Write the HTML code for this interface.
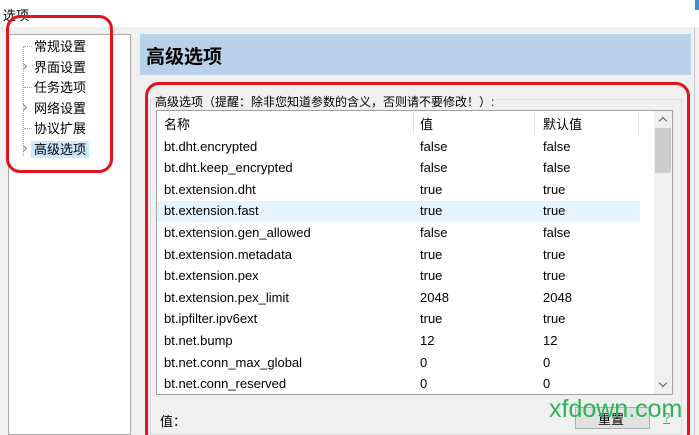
<!DOCTYPE html>
<html><head><meta charset="utf-8"><style>
*{margin:0;padding:0;box-sizing:border-box}
html,body{width:699px;height:435px;overflow:hidden}
body{background:#f0f0f0;font-family:"Liberation Sans","Noto Sans CJK SC",sans-serif;font-size:12px;color:#000;position:relative}
.a{position:absolute}
.t{white-space:nowrap}
.ch{position:absolute;left:21px;width:5px;height:5px;border-right:1px solid #888;border-bottom:1px solid #888;transform:rotate(-45deg)}
</style></head><body>
<div class="a" style="left:0;top:0;width:699px;height:27px;background:#fff"></div>
<div class="a t" style="left:3px;top:5px;font-size:13px">选项</div>
<div class="a" style="left:695px;top:0;width:4px;height:10px;background:#3c8ee0"></div>
<div class="a" style="left:8px;top:34px;width:123px;height:401px;background:#fff;border:1px solid #a8a8a8"></div>
<div class="a" style="left:23px;top:46px;width:1px;height:110px;border-left:1px dotted #aaa"></div>
<div class="a" style="left:24px;top:46px;width:8px;border-top:1px dotted #aaa"></div>
<div class="a" style="left:24px;top:87px;width:8px;border-top:1px dotted #aaa"></div>
<div class="a" style="left:24px;top:128px;width:8px;border-top:1px dotted #aaa"></div>
<div class="ch" style="top:64px"></div>
<div class="ch" style="top:105px"></div>
<div class="ch" style="top:146px"></div>
<div class="a t" style="left:34px;top:37px;font-size:13px;line-height:20.5px">
<div>常规设置</div><div>界面设置</div><div>任务选项</div><div>网络设置</div><div>协议扩展</div>
<div><span style="background:#cce8ff;margin-left:-3px;padding:1px 3px">高级选项</span></div>
</div>
<div class="a" style="left:140px;top:34px;width:551px;height:41px;background:#b9d1ea"></div>
<div class="a t" style="left:146px;top:42px;font-size:19px;font-weight:bold">高级选项</div>
<div class="a" style="left:694px;top:28px;width:1px;height:407px;background:#c8c8c8"></div>
<div class="a" style="left:150px;top:99px;width:532px;height:336px;border:1px solid #dcdcdc"></div>
<div class="a t" style="left:155px;top:93px;background:#f0f0f0;font-size:12px;padding-right:2px">高级选项（提醒：除非您知道参数的含义，否则请不要修改！）:</div>
<div class="a" style="left:156px;top:110px;width:517px;height:285px;background:#fff;border:1px solid #a0a0a0"></div>
<div class="a" style="left:413px;top:112px;width:1px;height:22px;background:#e5e5e5"></div>
<div class="a" style="left:534px;top:112px;width:1px;height:22px;background:#e5e5e5"></div>
<div class="a" style="left:638px;top:112px;width:1px;height:22px;background:#e5e5e5"></div>
<div class="a" style="left:157px;top:201px;width:483px;height:21px;background:#e5f3ff"></div>
<div class="a" style="left:654px;top:111px;width:18px;height:283px;background:#f0f0f0"></div>
<div class="a" style="left:655px;top:128px;width:16px;height:45px;background:#cdcdcd"></div>
<div class="a" style="left:660px;top:118px;width:6px;height:6px;border-left:1.5px solid #555;border-top:1.5px solid #555;transform:rotate(45deg)"></div>
<div class="a" style="left:660px;top:380px;width:6px;height:6px;border-right:1.5px solid #555;border-bottom:1.5px solid #555;transform:rotate(45deg)"></div>
<div class="a t" style="left:164px;top:114px;font-size:13px;line-height:21.6px">
<div>名称</div><div>bt.dht.encrypted</div><div>bt.dht.keep_encrypted</div><div>bt.extension.dht</div><div>bt.extension.fast</div><div>bt.extension.gen_allowed</div><div>bt.extension.metadata</div><div>bt.extension.pex</div><div>bt.extension.pex_limit</div><div>bt.ipfilter.ipv6ext</div><div>bt.net.bump</div><div>bt.net.conn_max_global</div><div>bt.net.conn_reserved</div>
</div>
<div class="a t" style="left:420px;top:114px;font-size:13px;line-height:21.6px">
<div>值</div><div>false</div><div>false</div><div>true</div><div>true</div><div>false</div><div>true</div><div>true</div><div>2048</div><div>true</div><div>12</div><div>0</div><div>0</div>
</div>
<div class="a t" style="left:543px;top:114px;font-size:13px;line-height:21.6px">
<div>默认值</div><div>false</div><div>false</div><div>true</div><div>true</div><div>false</div><div>true</div><div>true</div><div>2048</div><div>true</div><div>12</div><div>0</div><div>0</div>
</div>
<div class="a t" style="left:160px;top:411px;font-size:13px">值：</div>
<div class="a" style="left:575px;top:407px;width:75px;height:22px;background:#e1e1e1;border:1px solid #adadad"></div>
<div class="a t" style="left:598px;top:409px;font-size:13px">重置</div>
<div class="a t" style="left:549px;top:395px;font-size:25px;color:#2fb35a">xfdown.com</div>
<div class="a t" style="left:663px;top:410px;font-size:13px;color:#2fb35a;text-decoration:underline">?</div>
<div class="a" style="left:6px;top:15px;width:107px;height:158px;border:3px solid #e3121c;border-radius:14px"></div>
<div class="a" style="left:145px;top:82px;width:545px;height:365px;border:3px solid #e3121c;border-radius:14px"></div>
</body></html>
